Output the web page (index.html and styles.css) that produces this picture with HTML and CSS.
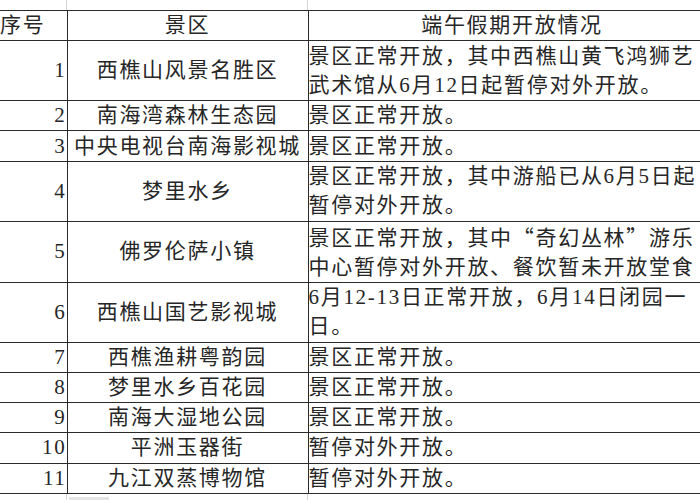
FILE: index.html
```html
<!DOCTYPE html>
<html lang="zh">
<head>
<meta charset="utf-8">
<link rel="stylesheet" href="styles.css">
</head>
<body>
<div class="sheet">
  <div class="strip strip-top">
    <span class="gc gc1"></span><span class="gc gc2"></span><span class="gc gc3"></span>
  </div>
  <table class="grid">
    <colgroup><col class="w1"><col class="w2"><col class="w3"></colgroup>
    <tr class="s">
      <th class="no-h">序号</th>
      <th class="name">景区</th>
      <th class="name">端午假期开放情况</th>
    </tr>
    <tr class="d"><td class="no">1</td><td class="name">西樵山风景名胜区</td><td class="desc">景区正常开放，其中西樵山黄飞鸿狮艺<br>武术馆从6月12日起暂停对外开放。</td></tr>
    <tr class="s"><td class="no">2</td><td class="name">南海湾森林生态园</td><td class="desc">景区正常开放。</td></tr>
    <tr class="s"><td class="no">3</td><td class="name">中央电视台南海影视城</td><td class="desc">景区正常开放。</td></tr>
    <tr class="d"><td class="no">4</td><td class="name">梦里水乡</td><td class="desc">景区正常开放，其中游船已从6月5日起<br>暂停对外开放。</td></tr>
    <tr class="d"><td class="no">5</td><td class="name">佛罗伦萨小镇</td><td class="desc">景区正常开放，其中<span class="cjk">“</span>奇幻丛林<span class="cjk">”</span>游乐<br>中心暂停对外开放、餐饮暂未开放堂食</td></tr>
    <tr class="d"><td class="no">6</td><td class="name">西樵山国艺影视城</td><td class="desc">6月12-13日正常开放，6月14日闭园一<br>日。</td></tr>
    <tr class="s"><td class="no">7</td><td class="name">西樵渔耕粤韵园</td><td class="desc">景区正常开放。</td></tr>
    <tr class="s"><td class="no">8</td><td class="name">梦里水乡百花园</td><td class="desc">景区正常开放。</td></tr>
    <tr class="s"><td class="no">9</td><td class="name">南海大湿地公园</td><td class="desc">景区正常开放。</td></tr>
    <tr class="s"><td class="no">10</td><td class="name">平洲玉器街</td><td class="desc">暂停对外开放。</td></tr>
    <tr class="s"><td class="no">11</td><td class="name">九江双蒸博物馆</td><td class="desc">暂停对外开放。</td></tr>
  </table>
  <div class="strip strip-bottom">
    <span class="gc gc1"></span><span class="gc gc2"><span class="chip"></span></span><span class="gc gc3"></span>
  </div>
</div>
</body>
</html>
```

FILE: styles.css
```css
html, body {
  margin: 0;
  padding: 0;
  background: #ffffff;
  overflow: hidden;
}

.sheet {
  width: 760px;
  font-family: "Liberation Serif", "Noto Sans CJK SC", serif;
  color: #262626;
}

.strip {
  display: flex;
  height: 10px;
}

.strip-bottom {
  height: 12px;
}

.gc {
  box-sizing: border-box;
  height: 100%;
  border-right: 1px solid #d6d6d6;
}

.gc1 { width: 67px; }
.gc2 { width: 241px; padding: 3px 0 0 2px; }
.gc3 { width: 408px; }

.chip {
  display: block;
  width: 40px;
  height: 100%;
  background: #e4e4e4;
}

.grid {
  border-collapse: collapse;
  table-layout: fixed;
  width: 716px;
}

.w1 { width: 67px; }
.w2 { width: 241px; }
.w3 { width: 408px; }

.grid th,
.grid td {
  border: 1px solid #2a2a2a;
  padding: 0;
  font-size: 21px;
  font-weight: 400;
  letter-spacing: 1.7px;
  line-height: 29px;
  white-space: nowrap;
  overflow: hidden;
  vertical-align: middle;
}

.grid tr > :first-child {
  border-left: none;
}

.grid tr.s > * { height: 29.12px; }
.grid tr.d > * { height: 59.25px; }

.cjk {
  font-family: "Noto Sans CJK SC", sans-serif;
}

.no-h {
  text-align: left;
  padding-left: 2px;
}

.no {
  text-align: right;
  padding-right: 6px;
  font-size: 23px;
}

.name {
  text-align: center;
}

.desc {
  text-align: left;
  padding-left: 5px;
}
```
